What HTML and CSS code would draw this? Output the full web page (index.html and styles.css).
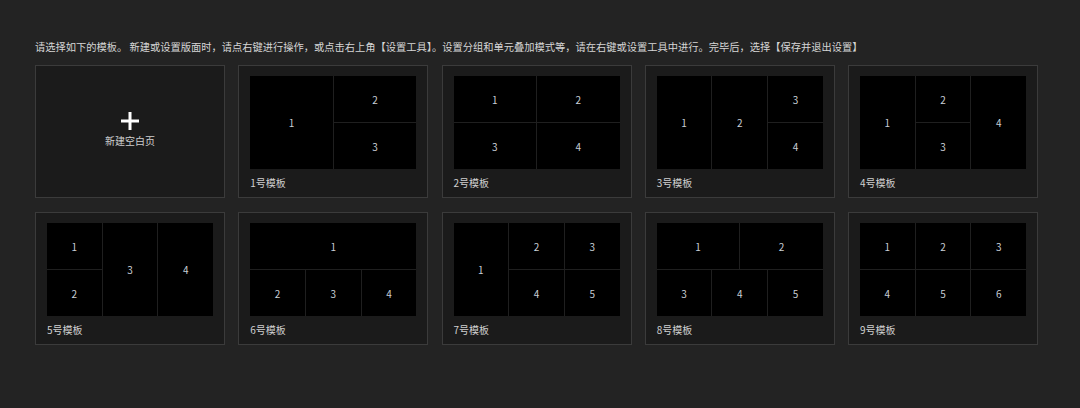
FILE: index.html
```html
<!DOCTYPE html>
<html lang="zh-CN">
<head>
<meta charset="UTF-8">
<title>模板选择</title>
<link rel="stylesheet" href="styles.css">
</head>
<body>
	<p class="tip">请选择如下的模板。 新建或设置版面时，请点右键进行操作，或点击右上角【设置工具】。设置分组和单元叠加模式等，请在右键或设置工具中进行。完毕后，选择【保存并退出设置】</p>
	<div class="list">
		<div class="card blank">
			<svg class="plus" width="18" height="18" viewBox="0 0 18 18"><rect x="7.5" y="0" width="3" height="18" fill="#fff"/><rect x="0" y="7.5" width="18" height="3" fill="#fff"/></svg>
			<span>新建空白页</span>
		</div>
		<div class="card">
			<div class="view">
				<i class="c3 r2">1</i><i class="c3">2</i><i class="c3">3</i>
			</div>
			<p class="name">1号模板</p>
		</div>
		<div class="card">
			<div class="view">
				<i class="c3">1</i><i class="c3">2</i><i class="c3">3</i><i class="c3">4</i>
			</div>
			<p class="name">2号模板</p>
		</div>
		<div class="card">
			<div class="view">
				<i class="c2 r2">1</i><i class="c2 r2">2</i><i class="c2">3</i><i class="c2">4</i>
			</div>
			<p class="name">3号模板</p>
		</div>
		<div class="card">
			<div class="view">
				<i class="c2 r2">1</i><i class="c2">2</i><i class="c2 r2">4</i><i class="c2">3</i>
			</div>
			<p class="name">4号模板</p>
		</div>
		<div class="card">
			<div class="view">
				<i class="c2">1</i><i class="c2 r2">3</i><i class="c2 r2">4</i><i class="c2">2</i>
			</div>
			<p class="name">5号模板</p>
		</div>
		<div class="card">
			<div class="view">
				<i class="c6">1</i><i class="c2">2</i><i class="c2">3</i><i class="c2">4</i>
			</div>
			<p class="name">6号模板</p>
		</div>
		<div class="card">
			<div class="view">
				<i class="c2 r2">1</i><i class="c2">2</i><i class="c2">3</i><i class="c2">4</i><i class="c2">5</i>
			</div>
			<p class="name">7号模板</p>
		</div>
		<div class="card">
			<div class="view">
				<i class="c3">1</i><i class="c3">2</i><i class="c2">3</i><i class="c2">4</i><i class="c2">5</i>
			</div>
			<p class="name">8号模板</p>
		</div>
		<div class="card">
			<div class="view">
				<i class="c2">1</i><i class="c2">2</i><i class="c2">3</i><i class="c2">4</i><i class="c2">5</i><i class="c2">6</i>
			</div>
			<p class="name">9号模板</p>
		</div>
	</div>
</body>
</html>
```

FILE: styles.css
```css
body {
	margin: 0;
	padding: 40px 0 0 35px;
	background-color: #232323;
	font-family: "Noto Sans CJK SC", "Noto Sans", sans-serif;
	color: #d6d6d6;
}
p {
	margin: 0;
}
.tip {
	font-size: 10.25px;
	line-height: 14px;
	white-space: nowrap;
	margin-bottom: 11px;
}
.list {
	display: grid;
	grid-template-columns: repeat(5, 190px);
	column-gap: 13.25px;
	row-gap: 14px;
}
.card {
	box-sizing: border-box;
	width: 190px;
	height: 133px;
	padding: 10px 11px 7px;
	background-color: #1b1b1b;
	border: 1px solid #3b3b3b;
}
.blank {
	display: flex;
	flex-direction: column;
	align-items: center;
	justify-content: center;
	gap: 5px;
	padding: 0 0 4px;
}
.blank span {
	font-size: 10px;
	line-height: 12px;
	color: #cfcfcf;
}
.view {
	height: 93px;
	display: grid;
	grid-template-columns: repeat(6, 1fr);
	grid-template-rows: repeat(2, 1fr);
	gap: 1px;
	background-color: #1f1f1f;
}
.view i {
	font-style: normal;
	background-color: #000;
	color: #c9cfd6;
	font-size: 10px;
	display: flex;
	align-items: center;
	justify-content: center;
}
.view .c2 { grid-column: span 2; }
.view .c3 { grid-column: span 3; }
.view .c6 { grid-column: span 6; }
.view .r2 { grid-row: span 2; }
.name {
	margin-top: 7px;
	font-size: 10px;
	line-height: 14px;
	color: #d0d0d0;
}
```
